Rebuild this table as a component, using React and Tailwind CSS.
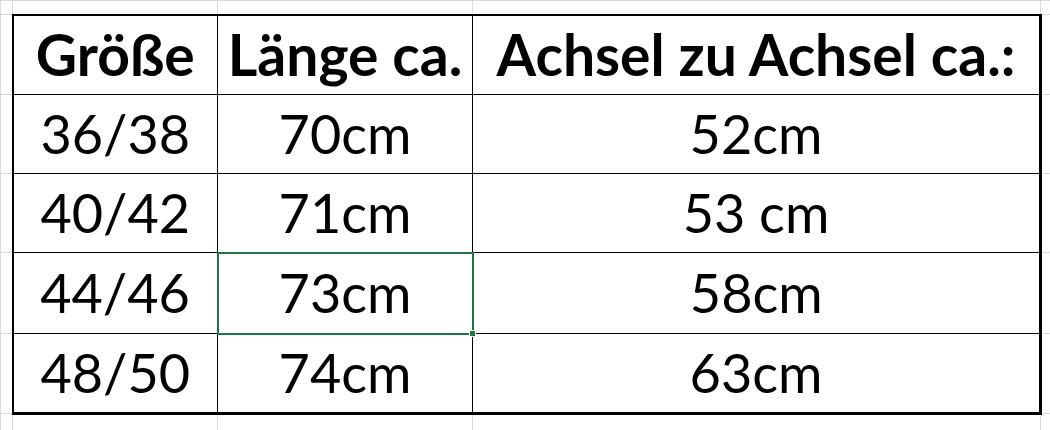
import React from 'react';

// Größentabelle im Tabellenkalkulations-Look
const rows = [
  ['36/38', '70cm', '52cm'],
  ['40/42', '71cm', '53 cm'],
  ['44/46', '73cm', '58cm'],
  ['48/50', '74cm', '63cm'],
];

const rowH = ['h-[80px]', 'h-[79px]', 'h-[79px]', 'h-[81px]', 'h-[80px]'];

const grid = 'border border-[#dadada]';
const head = 'text-center font-bold text-[57px] leading-none';
const cell = 'text-center text-[54px] leading-none';

export default function App() {
  return (
    <div className="w-[1050px] h-[430px] overflow-hidden bg-white">
      <table
        className="table-fixed border-collapse w-[1050px] text-black"
        style={{ fontFamily: 'Lato, "Open Sans", sans-serif' }}
      >
        <colgroup>
          <col className="w-[12px]" />
          <col className="w-[205px]" />
          <col className="w-[255px]" />
          <col className="w-[568px]" />
          <col className="w-[10px]" />
        </colgroup>
        <tbody>
          <tr className="h-[14px]">
            <td className={grid} />
            <td className={grid} />
            <td className={grid} />
            <td className={grid} />
            <td className={grid} />
          </tr>
          <tr className={rowH[0]}>
            <td className={grid} />
            <td className={`border-t-2 border-l-2 border-r border-b border-black ${head}`}>Größe</td>
            <td className={`border-t-2 border-x border-b border-black ${head}`}>Länge ca.</td>
            <td className={`border-t-2 border-r-[3px] border-b border-l border-black ${head}`}>
              Achsel zu Achsel ca.:
            </td>
            <td className={grid} />
          </tr>
          {rows.map((r, i) => {
            const last = i === rows.length - 1;
            const sel = i === 2;
            const bottom = last ? 'border-b-[3px]' : 'border-b';
            return (
              <tr key={r[0]} className={rowH[i + 1]}>
                <td className={grid} />
                <td className={`border-l-2 border-r border-t border-black ${bottom} ${cell}`}>{r[0]}</td>
                <td
                  className={
                    sel
                      ? `relative border-2 border-[#217346] ${cell}`
                      : `border-x border-t border-black ${bottom} ${cell}`
                  }
                >
                  {r[1]}
                  {sel && (
                    <span className="absolute -right-[4px] -bottom-[4px] w-[7px] h-[7px] bg-[#217346] border border-white" />
                  )}
                </td>
                <td className={`border-l border-t border-r-[3px] border-black ${bottom} ${cell}`}>{r[2]}</td>
                <td className={grid} />
              </tr>
            );
          })}
          <tr className="h-[17px]">
            <td className={grid} />
            <td className={grid} />
            <td className={grid} />
            <td className={grid} />
            <td className={grid} />
          </tr>
        </tbody>
      </table>
    </div>
  );
}
